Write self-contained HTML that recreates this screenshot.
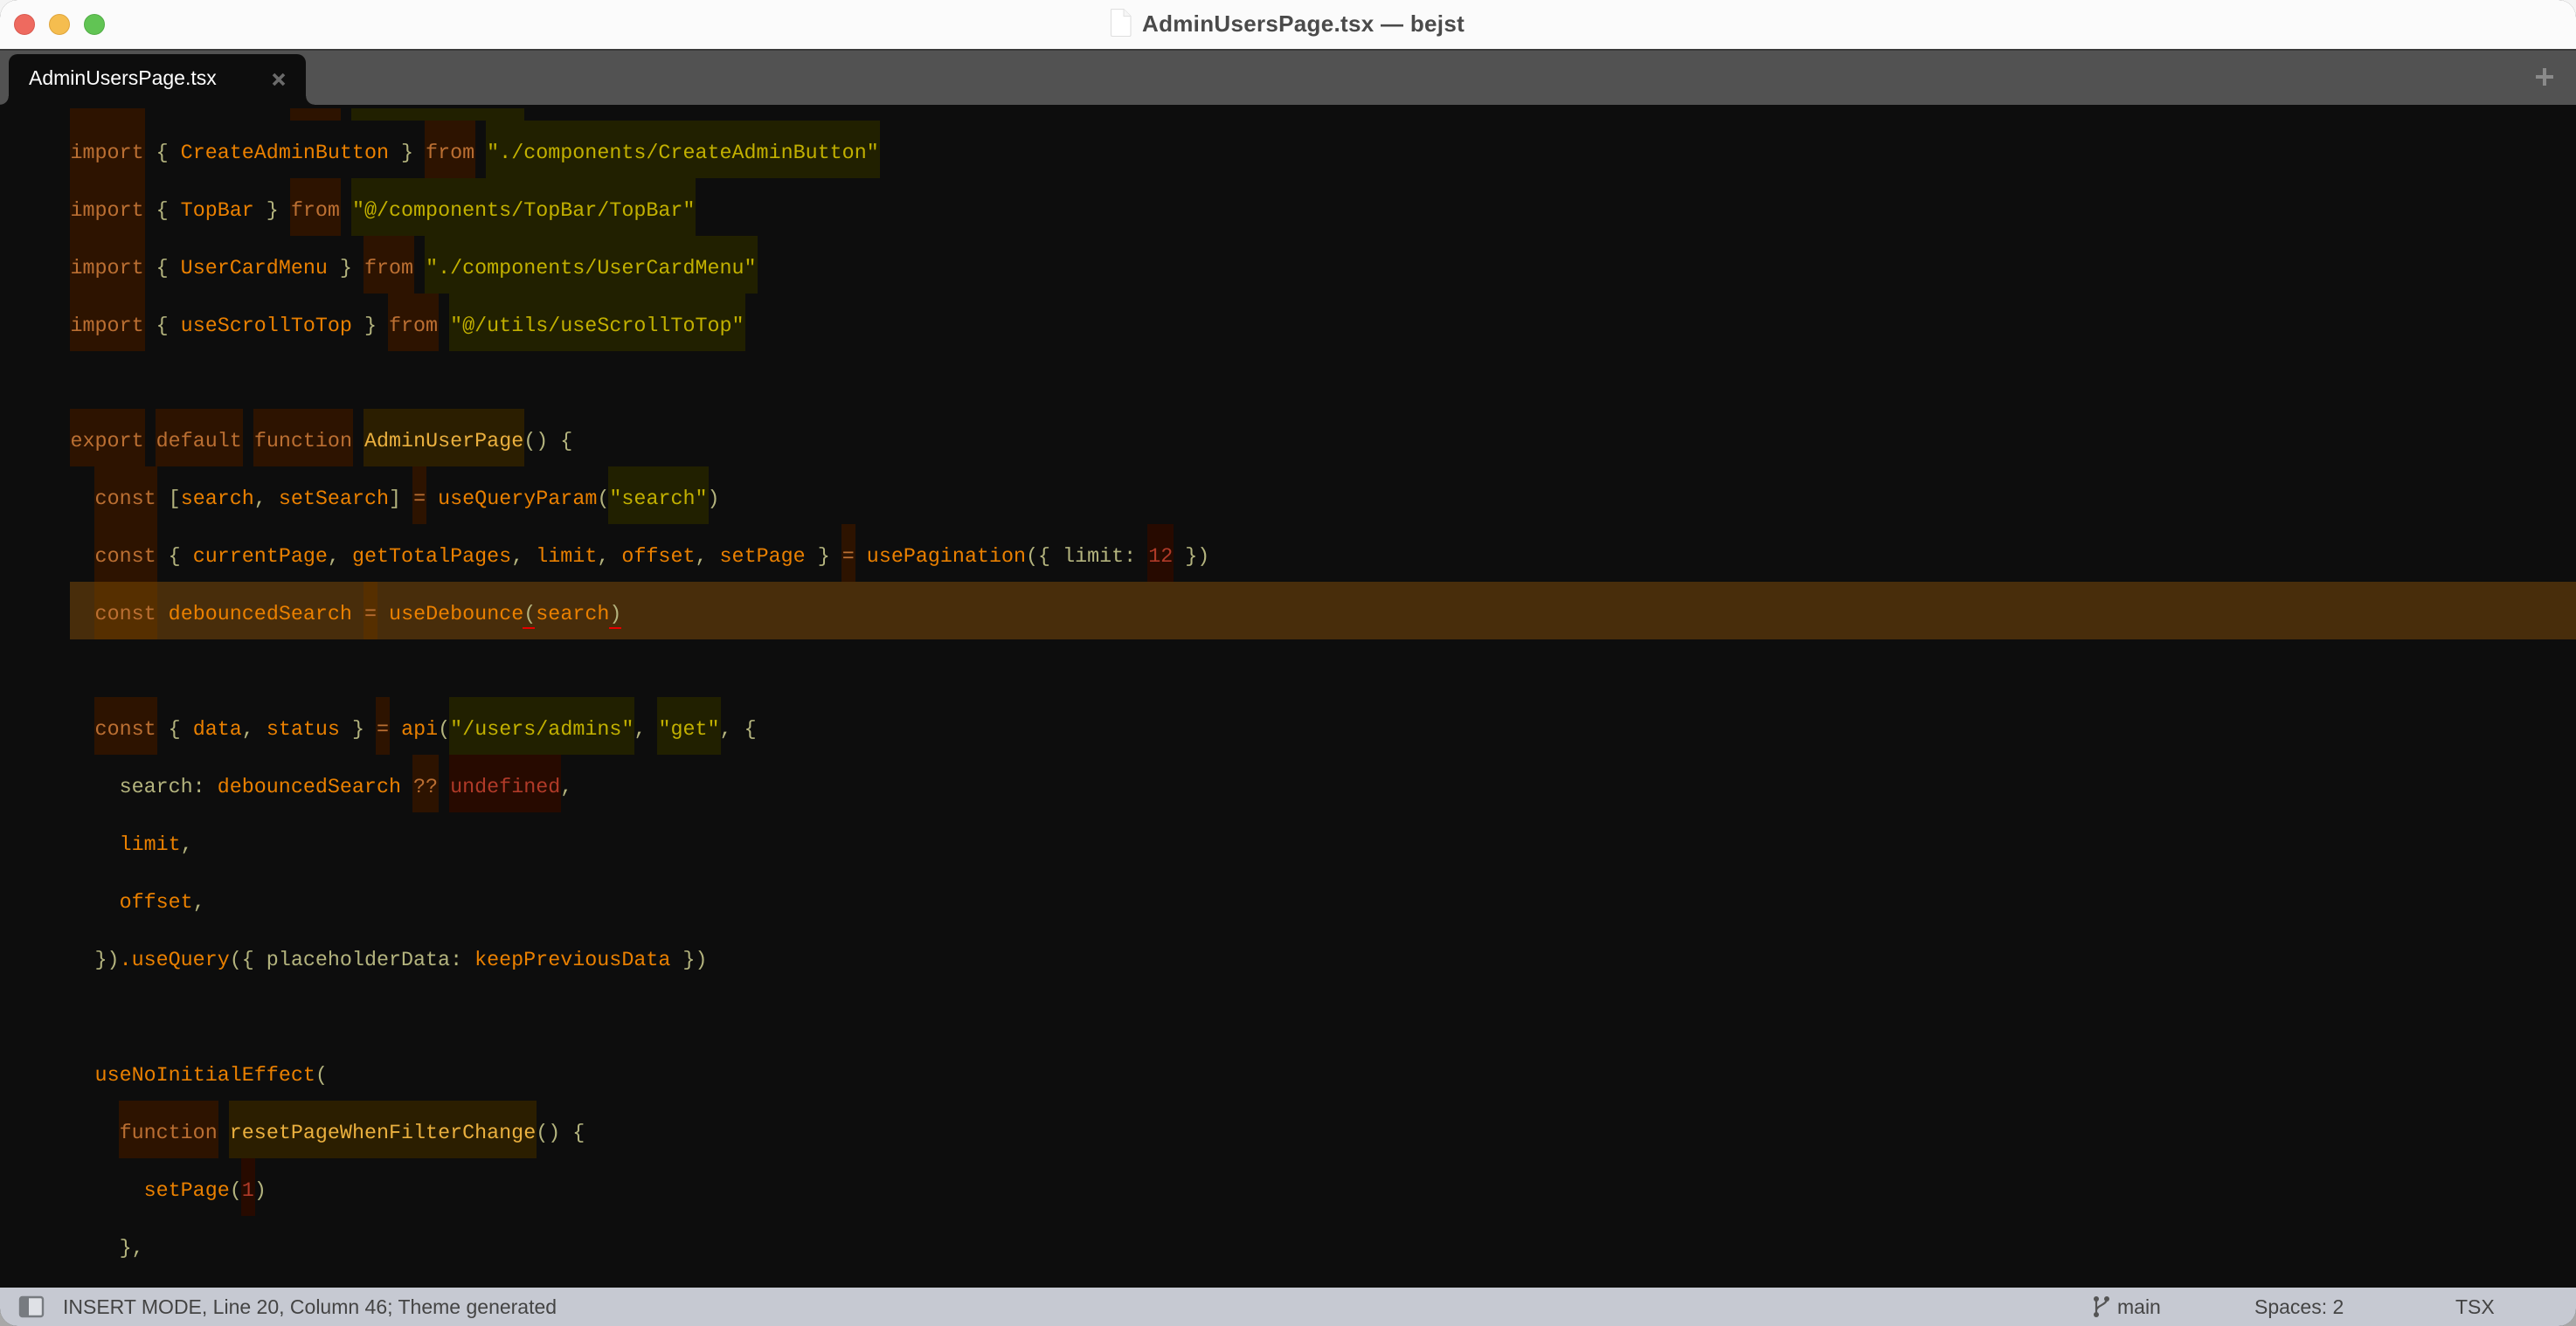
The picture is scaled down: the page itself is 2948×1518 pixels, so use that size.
<!DOCTYPE html>
<html lang="en"><head><meta charset="utf-8"><title>AdminUsersPage.tsx — bejst</title>
<style>
html,body{margin:0;padding:0;width:2948px;height:1518px;overflow:hidden;background:linear-gradient(#f4f4f4 0,#f4f4f4 50%,#a8a8a8 100%)}
#w{position:absolute;left:0;top:0;width:2948px;height:1518px;border-radius:20px;overflow:hidden;background:#0d0d0d;font-family:"Liberation Sans",sans-serif}
.abs{position:absolute}
#tb{left:0;top:0;width:2948px;height:56px;background:#fbfbfb}
#tbl{left:0;top:56px;width:2948px;height:2px;background:#3a3a3a}
#ts{left:0;top:58px;width:2948px;height:62px;background:#525252}
.dot{position:absolute;top:16px;width:24px;height:24px;border-radius:50%;box-sizing:border-box}
#title{left:1307px;top:7px;line-height:40px;font-size:26px;font-weight:bold;color:#4a4a4a;letter-spacing:.3px;white-space:pre}
#tab{left:10px;top:62px;width:340px;height:58px;background:#0d0d0d;border-radius:10px 10px 0 0}
#tab:before,#tab:after{content:"";position:absolute;bottom:0;width:10px;height:10px}
#tab:before{left:-10px;background:radial-gradient(circle at 0 0,transparent 9.5px,#0d0d0d 10px)}
#tab:after{right:-10px;background:radial-gradient(circle at 100% 0,transparent 9.5px,#0d0d0d 10px)}
#tabt{left:33px;top:69px;line-height:40px;font-size:23px;color:#fff;white-space:pre}
.hl{position:absolute;left:80px;top:666px;right:0;height:66px;background:#482d0b}
.l{position:absolute;left:80.5px;height:66px;line-height:66px;font:23.37px/66px "Liberation Mono",monospace;white-space:pre;color:#b4b47e;z-index:1;text-rendering:geometricPrecision}
.b{display:inline-block;position:relative;line-height:66px;height:66px;vertical-align:top}
.b:before{content:"";position:absolute;left:-1px;right:-1px;top:-5px;height:66px;z-index:-1}
.k{color:#bb6f32}.k:before{background:#2d1300}
.s{color:#c2b000}.s:before{background:#212000}
.f{color:#eab03f}.f:before{background:#2b1e00}
.n{color:#b03a28}.n:before{background:#270a00}
.h:before{background:#562f00}
.v{color:#ea8000}
.q{position:absolute;height:2px;top:718px;width:14px;background:#e80000;z-index:2}
#st{left:0;top:1474px;width:2948px;height:44px;background:#c6c9d2}
.st{position:absolute;top:1474px;line-height:44px;font-size:23px;color:#444;white-space:pre}
</style></head><body>
<div id="w">
<div class="abs" id="tb"></div>
<div class="abs" id="tbl"></div>
<div class="abs" id="ts"></div>
<div class="dot" style="left:16px;background:#ee6a5f;border:1px solid #d9594f"></div>
<div class="dot" style="left:56px;background:#f5bd4f;border:1px solid #dfa53c"></div>
<div class="dot" style="left:96px;background:#61c454;border:1px solid #52ad46"></div>
<svg class="abs" style="left:1270px;top:9px" width="25" height="34" viewBox="0 0 25 34"><path d="M2 1.5H16L24 9.5V31a1.5 1.5 0 0 1-1.5 1.5H3A1.5 1.5 0 0 1 1.5 31V2Z" fill="#fff" stroke="#dedede" stroke-width="1.1"/><path d="M16 1.5V9.5H24" fill="#f6f6f6" stroke="#e0e0e0" stroke-width="1"/></svg>
<div class="abs" id="title">AdminUsersPage.tsx — bejst</div>
<div class="abs" id="tab"></div>
<div class="abs" id="tabt">AdminUsersPage.tsx</div>
<svg class="abs" style="left:310px;top:82px" width="18" height="18" viewBox="0 0 18 18"><path d="M3 3L15 15M15 3L3 15" stroke="#6a6a6a" stroke-width="3.6"/></svg>
<div class="abs" style="left:2910px;top:78px;width:4px;height:20px;background:#8a8a8a"></div>
<div class="abs" style="left:2902px;top:86px;width:20px;height:4px;background:#8a8a8a"></div>

<div class="abs" style="left:80px;top:124px;width:86px;height:14px;background:#2d1300"></div>
<div class="abs" style="left:332px;top:124px;width:58px;height:14px;background:#2d1300"></div>
<div class="abs" style="left:402px;top:124px;width:198px;height:14px;background:#212000"></div>
<div class="hl"></div>

<div class="l" style="top:143px"><span class="b k">import</span> { <span class="v">CreateAdminButton</span> } <span class="b k">from</span> <span class="b s">"./components/CreateAdminButton"</span></div>
<div class="l" style="top:209px"><span class="b k">import</span> { <span class="v">TopBar</span> } <span class="b k">from</span> <span class="b s">"@/components/TopBar/TopBar"</span></div>
<div class="l" style="top:275px"><span class="b k">import</span> { <span class="v">UserCardMenu</span> } <span class="b k">from</span> <span class="b s">"./components/UserCardMenu"</span></div>
<div class="l" style="top:341px"><span class="b k">import</span> { <span class="v">useScrollToTop</span> } <span class="b k">from</span> <span class="b s">"@/utils/useScrollToTop"</span></div>
<div class="l" style="top:473px"><span class="b k">export</span> <span class="b k">default</span> <span class="b k">function</span> <span class="b f">AdminUserPage</span>() {</div>
<div class="l" style="top:539px">  <span class="b k">const</span> [<span class="v">search</span>, <span class="v">setSearch</span>] <span class="b k">=</span> <span class="v">useQueryParam</span>(<span class="b s">"search"</span>)</div>
<div class="l" style="top:605px">  <span class="b k">const</span> { <span class="v">currentPage</span>, <span class="v">getTotalPages</span>, <span class="v">limit</span>, <span class="v">offset</span>, <span class="v">setPage</span> } <span class="b k">=</span> <span class="v">usePagination</span>({ limit: <span class="b n">12</span> })</div>
<div class="l" style="top:671px">  <span class="b k h">const</span> <span class="v">debouncedSearch</span> <span class="b k h">=</span> <span class="v">useDebounce</span>(<span class="v">search</span>)</div>
<div class="q" style="left:598px"></div><div class="q" style="left:697px"></div>
<div class="l" style="top:803px">  <span class="b k">const</span> { <span class="v">data</span>, <span class="v">status</span> } <span class="b k">=</span> <span class="v">api</span>(<span class="b s">"/users/admins"</span>, <span class="b s">"get"</span>, {</div>
<div class="l" style="top:869px">    search: <span class="v">debouncedSearch</span> <span class="b k">??</span> <span class="b n">undefined</span>,</div>
<div class="l" style="top:935px">    <span class="v">limit</span>,</div>
<div class="l" style="top:1001px">    <span class="v">offset</span>,</div>
<div class="l" style="top:1067px">  })<span class="v">.useQuery</span>({ placeholderData: <span class="v">keepPreviousData</span> })</div>
<div class="l" style="top:1199px">  <span class="v">useNoInitialEffect</span>(</div>
<div class="l" style="top:1265px">    <span class="b k">function</span> <span class="b f">resetPageWhenFilterChange</span>() {</div>
<div class="l" style="top:1331px">      <span class="v">setPage</span>(<span class="b n">1</span>)</div>
<div class="l" style="top:1397px">    },</div>

<div class="abs" id="st"></div>
<svg class="abs" style="left:21px;top:1483px" width="30" height="26" viewBox="0 0 30 26"><rect x="2" y="2" width="26" height="22" rx="2.5" fill="#dfe1e6" stroke="#777b80" stroke-width="2.4"/><rect x="2" y="2" width="10" height="22" fill="#777b80"/></svg>
<div class="st" style="left:72px">INSERT MODE, Line 20, Column 46; Theme generated</div>
<svg class="abs" style="left:2394px;top:1482px" width="22" height="28" viewBox="0 0 22 28"><circle cx="5" cy="5" r="3" fill="#555"/><circle cx="5" cy="23" r="3" fill="#555"/><circle cx="17" cy="5" r="3" fill="#555"/><path d="M5 5V23M17 5C17 12 6 12 5 18" fill="none" stroke="#555" stroke-width="2.2"/></svg>
<div class="st" style="left:2423px">main</div>
<div class="st" style="left:2580px">Spaces: 2</div>
<div class="st" style="left:2810px">TSX</div>
</div>
</body></html>
